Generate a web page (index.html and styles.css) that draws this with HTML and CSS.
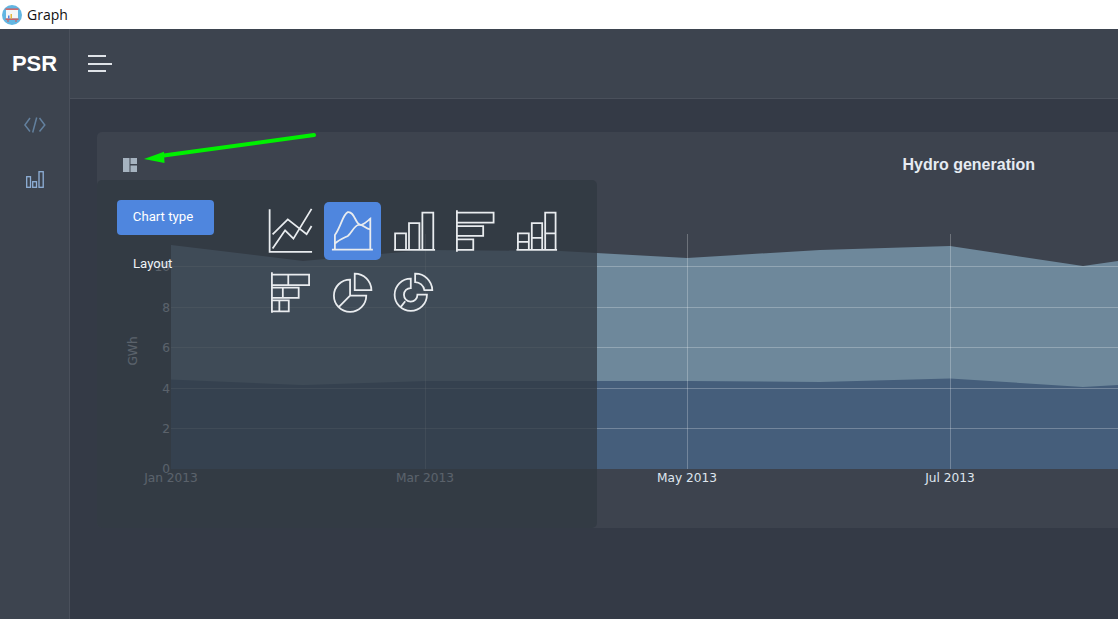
FILE: index.html
```html
<!DOCTYPE html>
<html lang="en">
<head>
    <meta charset="utf-8">
    <meta name="viewport" content="width=device-width, initial-scale=1.0">
    <title>Graph</title>
    <link rel="stylesheet" href="styles.css">
</head>
<body>
    <div class="titlebar">
        <svg class="app-icon" viewBox="0 0 20 20">
            <circle cx="10" cy="10" r="10" fill="#62b6e2"/>
            <rect x="4" y="4.500" width="12" height="9" fill="#f4f6f8"/>
            <rect x="3.500" y="3.500" width="13" height="1.300" fill="#d9534f"/>
            <rect x="3.500" y="13.500" width="13" height="1.300" fill="#d9534f"/>
            <rect x="6" y="10.500" width="1.500" height="3" fill="#4f86de"/>
            <rect x="8.500" y="9" width="1.500" height="4.500" fill="#e8b93c"/>
            <path d="M6 15v2M14 15v2" stroke="#d9534f" stroke-width="1"/>
        </svg>
        <span>Graph</span>
    </div>

    <div class="shell">
        <aside class="sidebar">
            <div class="brand">PSR</div>
            <a class="side-link code-link">
                <svg width="22" height="16" viewBox="0 0 22 16" fill="none" stroke="currentColor" stroke-width="1.500">
                    <path d="M6 1 .9 8l5.100 6.500M15.500 1 20.800 8l-5.300 6.500M12.700 .5 8.700 15.500"/>
                </svg>
            </a>
            <a class="side-link chart-link">
                <svg width="18" height="17" viewBox="0 0 18 17" fill="none" stroke="currentColor" stroke-width="1.300">
                    <rect x=".7" y="5.700" width="3.800" height="10.600"/>
                    <rect x="6.700" y="10.700" width="3.800" height="5.600"/>
                    <rect x="13" y=".7" width="4.200" height="15.600"/>
                </svg>
            </a>
        </aside>

        <div class="main">
            <div class="topbar">
                <div class="burger">
                    <span></span>
                    <span class="long"></span>
                    <span></span>
                </div>
            </div>

            <div class="content">
                <section class="card">
                    <div class="card-head">
                        <svg class="layout-icon" width="14" height="14" viewBox="0 0 14 14" fill="#a6b3c0">
                            <rect x="0" y="0" width="6.500" height="14"/>
                            <rect x="7.500" y="0" width="6.500" height="6"/>
                            <rect x="7.500" y="7.500" width="6.500" height="6.500"/>
                        </svg>
                        <h2 class="chart-title">Hydro generation</h2>
                    </div>

                    <svg class="chart" width="1021" height="348" viewBox="97 180 1021 348">
                        <path class="area-top" d="M171 245 303 261 425 250 560 251 687 258 820 250 950 246 1083 266 1118 261V469H171Z"/>
                        <path class="area-low" d="M171 379.500 303 385 425 381 560 381 687 381 820 382 950 378.500 1083 387 1118 385V469H171Z"/>
                        <g class="grid">
                            <path d="M171 266.500H1118M171 307.500H1118M171 347.500H1118M171 388.500H1118M171 428.500H1118"/>
                            <path d="M425.500 234V469M687.500 234V469M950.500 234V469"/>
                        </g>
                        <g class="tick-y">
                            <text x="170" y="271">10</text>
                            <text x="170" y="312">8</text>
                            <text x="170" y="352">6</text>
                            <text x="170" y="393">4</text>
                            <text x="170" y="433">2</text>
                            <text x="170" y="473">0</text>
                        </g>
                        <g class="tick-x">
                            <text x="171" y="482">Jan 2013</text>
                            <text x="425" y="482">Mar 2013</text>
                            <text x="687" y="482">May 2013</text>
                            <text x="950" y="482">Jul 2013</text>
                        </g>
                        <text class="axis-name" transform="translate(137 351) rotate(-90)">GWh</text>
                    </svg>

                    <div class="picker">
                        <div class="picker-tabs">
                            <button class="tab-btn" type="button">Chart type</button>
                            <div class="tab-link">Layout</div>
                        </div>
                        <div class="picker-grid">
                            <div class="tile">
                                <svg viewBox="0 0 58 58">
                                    <path d="M7.700 7v43H50.500"/>
                                    <path d="M10.700 32.300 26 17.300 45 32.300 50 24M10.700 46.700 23.300 28.300 31.700 36.700 50 6.700"/>
                                </svg>
                            </div>
                            <div class="tile active">
                                <svg viewBox="0 0 58 58">
                                    <path d="M8 47.700H49.300M11 47.700V33C17 25 19 12 24 10 29 9 31 17 34 21 37 25 40 22 46.700 16.700V47.700"/>
                                    <path d="M11 41.700C15 38 20 36 24 34 28 31 30 24 35 22.700 39 22 42 27 46.700 27.300"/>
                                </svg>
                            </div>
                            <div class="tile">
                                <svg viewBox="0 0 58 58">
                                    <path d="M9 48H50.500"/>
                                    <path d="M10.200 48V31.500H21.200V48M24.200 48V21H34.700V48M37.700 48V10.500H48.700V48"/>
                                </svg>
                            </div>
                            <div class="tile">
                                <svg viewBox="0 0 58 58">
                                    <path d="M10 8V50"/>
                                    <path d="M10 10.500H47V20.500H10M10 24H36.500V34H10M10 37.500H26.500V48H10"/>
                                </svg>
                            </div>
                            <div class="tile">
                                <svg viewBox="0 0 58 58">
                                    <path d="M8.500 48H49.500"/>
                                    <path d="M10 48V31.500H21V48M10 40H21M24 48V21H34.500V48M24 36H34.500M37.500 48V10.500H48V48M37.500 31.500H48"/>
                                </svg>
                            </div>
                            <div class="tile">
                                <svg viewBox="0 0 58 58">
                                    <path d="M10 8V49"/>
                                    <path d="M10 10.500H47.500V21H10M26.500 10.500V21M10 23.500H37V34H10M21 23.500V34M10 36.500H27V47.500H10M17.500 36.500V47.500"/>
                                </svg>
                            </div>
                            <div class="tile">
                                <svg viewBox="0 0 58 58">
                                    <path d="M26.300 15.400A16.300 16.300 0 1 0 42.600 31.700H26.300ZM26.300 31.700 15.300 42.700"/>
                                    <path d="M31 9.500A16.800 16.800 0 0 1 47.800 26H31Z"/>
                                </svg>
                            </div>
                            <div class="tile">
                                <svg viewBox="0 0 58 58">
                                    <path d="M26 14.400A16.300 16.300 0 1 0 42.300 30.700H32.700A6.800 6.800 0 1 1 26 24ZM20.400 37.300 16.200 42.700"/>
                                    <path d="M30.400 9.500A17 17 0 0 1 47.700 26H39.700A9.500 9.500 0 0 0 30.400 18Z"/>
                                </svg>
                            </div>
                        </div>
                    </div>
                </section>
            </div>
        </div>
    </div>

    <!-- green arrow drawn on top of the screenshot -->
    <svg class="arrow" width="176" height="34" viewBox="0 0 176 34">
        <path d="M170 3 16 24" stroke="#00f000" stroke-width="4" stroke-linecap="round" fill="none"/>
        <path d="M0 27 20 19.700 20.500 31Z" fill="#00f000"/>
    </svg>
</body>
</html>
```
FILE: styles.css
```css
html, body {
    margin: 0;
    height: 100%;
    overflow: hidden;
}
body {
    background-color: #343a46;
    display: flex;
    flex-direction: column;
    position: relative;
    font-family: "Roboto", "Liberation Sans", sans-serif;
}

.titlebar {
    height: 29px;
    background-color: white;
    color: #111;
    display: flex;
    align-items: center;
    padding-left: 2px;
    gap: 5px;
    font-family: "Open Sans", sans-serif;
    font-size: 14px;
    flex-shrink: 0;
}
.app-icon {
    width: 20px;
    height: 20px;
}

.shell {
    flex: 1;
    display: flex;
    min-height: 0;
}

.sidebar {
    width: 69px;
    background-color: #3d444f;
    border-right: 1px solid #4a505b;
    display: flex;
    flex-direction: column;
    align-items: center;
    flex-shrink: 0;
}
.brand {
    height: 69px;
    line-height: 69px;
    color: white;
    font-family: "Liberation Sans", sans-serif;
    font-weight: bold;
    font-size: 22px;
}
.side-link {
    height: 54px;
    display: flex;
    align-items: center;
    justify-content: center;
}
.code-link {
    color: #63809e;
}
.chart-link {
    color: #8fb0d8;
}

.main {
    flex: 1;
    min-width: 0;
    display: flex;
    flex-direction: column;
}
.topbar {
    height: 69px;
    background-color: #3d444f;
    border-bottom: 1px solid #4a505b;
    display: flex;
    align-items: center;
    padding-left: 18px;
    flex-shrink: 0;
}
.burger {
    display: flex;
    flex-direction: column;
    gap: 5.500px;
    width: 24px;
}
.burger span {
    display: block;
    height: 2px;
    width: 18px;
    background-color: #dfe3e8;
}
.burger .long {
    width: 24px;
}

.content {
    flex: 1;
    padding: 33px 0 0 27px;
}
.card {
    position: relative;
    height: 396px;
    background-color: #3d434e;
    border-radius: 5px 0 0 5px;
}
.card-head {
    height: 48px;
    display: flex;
    align-items: center;
    padding-left: 26px;
    padding-top: 17px;
    box-sizing: border-box;
}
.layout-icon {
    flex-shrink: 0;
}
.chart-title {
    margin: 0 0 0 765.500px;
    color: #e6ebf2;
    font-family: "Liberation Sans", sans-serif;
    font-size: 16px;
    font-weight: bold;
    white-space: nowrap;
}

.chart {
    display: block;
}
.area-top {
    fill: #6e889b;
}
.area-low {
    fill: #455e7b;
}
.grid path {
    stroke: rgba(255, 255, 255, 0.25);
    stroke-width: 1;
    fill: none;
}
.tick-y text, .tick-x text, .axis-name {
    font-family: "DejaVu Sans", sans-serif;
    font-size: 12.200px;
    fill: #dfe6ee;
}
.tick-y text {
    text-anchor: end;
}
.tick-x text {
    text-anchor: middle;
}
.axis-name {
    text-anchor: middle;
}

.picker {
    position: absolute;
    left: 0;
    top: 48px;
    bottom: 0;
    width: 500px;
    background-color: rgba(49, 56, 66, 0.76);
    border-radius: 5px;
    display: flex;
    padding: 20px 0 0 20px;
    box-sizing: border-box;
}
.picker-tabs {
    width: 97px;
    margin-right: 48px;
    flex-shrink: 0;
}
.tab-btn {
    width: 97px;
    height: 35px;
    background-color: #4f86de;
    color: white;
    border: none;
    border-radius: 4px;
    font-family: "Roboto", sans-serif;
    font-size: 13.200px;
    padding: 0 5px 2px 0;
}
.tab-link {
    margin-top: 21px;
    padding-left: 16px;
    color: #eef2f7;
    font-size: 13.200px;
}
.picker-grid {
    display: grid;
    grid-template-columns: repeat(5, 57.500px);
    grid-auto-rows: 58px;
    gap: 4px;
    align-content: start;
    margin-top: 2px;
}
.tile {
    border-radius: 5px;
}
.tile.active {
    background-color: #4f86de;
}
.tile svg {
    display: block;
    width: 100%;
    height: 100%;
    fill: none;
    stroke: #e9ecef;
    stroke-width: 1.800;
}

.arrow {
    position: absolute;
    left: 144px;
    top: 132px;
}
```
